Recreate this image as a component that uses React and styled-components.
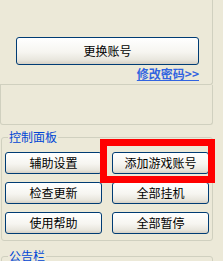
import React from 'react';
import styled, { createGlobalStyle } from 'styled-components';

const GlobalStyle = createGlobalStyle`
  html, body {
    margin: 0;
    padding: 0;
    background: #ece9d8;
  }
  body {
    font-family: "Noto Sans CJK SC", "Liberation Sans", sans-serif;
    font-size: 12px;
  }
`;

const frame = '#d0d0bf';

const Page = styled.div`
  width: 223px;
  height: 261px;
  overflow: hidden;
  background: #ece9d8;
`;

const AccountBox = styled.div`
  box-sizing: border-box;
  width: 213px;
  height: 85px;
  padding: 37px 13px 0 16px;
  border-right: 1px solid ${frame};
  border-bottom: 1px solid ${frame};
  border-bottom-right-radius: 3px;
  display: flex;
  flex-direction: column;
  align-items: stretch;
`;

const Button = styled.button`
  box-sizing: border-box;
  height: ${p => p.$h || 22}px;
  width: 100%;
  margin: 0;
  padding: 0;
  border: 1px solid #003c74;
  border-radius: 3px;
  background: linear-gradient(180deg, #ffffff 0%, #f6f5f0 55%, #e8e6dd 85%, #d6d0c5 100%);
  font-family: "Noto Sans CJK SC", "Liberation Sans", sans-serif;
  font-size: 12px;
  line-height: 14px;
  color: #000;
  cursor: pointer;
`;

const LinkRow = styled.div`
  display: flex;
  justify-content: flex-end;
  margin-top: 2px;
`;

const Link = styled.a`
  color: #3264e0;
  font-weight: bold;
  font-size: 12px;
  line-height: 14px;
  text-decoration: underline;
  cursor: pointer;
`;

const EmptyBox = styled.div`
  box-sizing: border-box;
  width: 213px;
  height: 40px;
  border: 1px solid ${frame};
  border-top: none;
  border-radius: 0 0 3px 3px;
`;

const Group = styled.fieldset`
  box-sizing: border-box;
  width: 212px;
  min-width: 0;
  margin: ${p => p.$top}px 0 0 1px;
  padding: 8px 2px 6px 3px;
  border: 1px solid ${frame};
  border-radius: 3px;
`;

const Legend = styled.legend`
  margin-left: 3px;
  padding: 0 1px;
  color: #0046d5;
  font-size: 12px;
  line-height: 14px;
`;

const ButtonGrid = styled.div`
  display: grid;
  grid-template-columns: 97px 97px;
  grid-auto-rows: 22px;
  column-gap: 10px;
  row-gap: 8px;
`;

const Marked = styled.div`
  position: relative;

  &::after {
    content: '';
    position: absolute;
    left: -12px;
    right: -6px;
    top: -13px;
    bottom: -9px;
    border: 7px solid #ff0000;
    pointer-events: none;
  }
`;

const controls = [
  ['辅助设置', false],
  ['添加游戏账号', true],
  ['检查更新', false],
  ['全部挂机', false],
  ['使用帮助', false],
  ['全部暂停', false],
];

export default function App() {
  return (
    <Page>
      <GlobalStyle />
      <AccountBox>
        <Button $h={28}>更换账号</Button>
        <LinkRow>
          <Link>修改密码&gt;&gt;</Link>
        </LinkRow>
      </AccountBox>
      <EmptyBox />
      <Group $top={5}>
        <Legend>控制面板</Legend>
        <ButtonGrid>
          {controls.map(([label, marked]) =>
            marked ? (
              <Marked key={label}>
                <Button>{label}</Button>
              </Marked>
            ) : (
              <Button key={label}>{label}</Button>
            )
          )}
        </ButtonGrid>
      </Group>
      <Group $top={8}>
        <Legend>公告栏</Legend>
        <div style={{ height: 40 }} />
      </Group>
    </Page>
  );
}
